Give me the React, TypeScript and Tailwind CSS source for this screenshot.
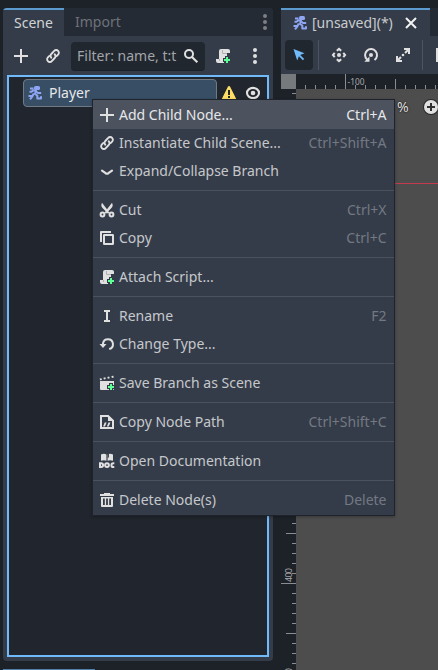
import type { ReactNode } from 'react';

const FG = '#e0e0e0';

function Icon({ children, className = '', size = 16 }: { children: ReactNode; className?: string; size?: number }) {
  return (
    <svg width={size} height={size} viewBox="0 0 16 16" className={'block shrink-0 ' + className}>
      {children}
    </svg>
  );
}

const Add = () => <Icon><path fill={FG} d="M7 1v6H1v2h6v6h2V9h6V7H9V1z" /></Icon>;

const Link = () => (
  <Icon>
    <g fill="none" stroke={FG} strokeWidth="1.900" strokeLinecap="round">
      <path d="M6.300 9.700a2.600 2.600 0 0 1 0-3.700L9.200 2.900a2.600 2.600 0 0 1 3.900 0 2.600 2.600 0 0 1 0 3.700L11.600 8.100" />
      <path d="M9.700 6.300a2.600 2.600 0 0 1 0 3.700L6.800 13.100a2.600 2.600 0 0 1-3.900 0 2.600 2.600 0 0 1 0-3.700L4.400 7.900" />
    </g>
  </Icon>
);

const Chevron = () => (
  <Icon><path d="M3 7.600l3.600 2.600q1.400.9 2.800 0L13 7.600" fill="none" stroke={FG} strokeWidth="2.200" strokeLinecap="round" /></Icon>
);

const Cut = () => (
  <Icon>
    <path fill={FG} d="M3 .8C1.800 3.500 2.200 5 4 6.600l2.700 2.600-1.200 1.200 1.500 1.400 1-1 1 1 1.500-1.400-1.200-1.200L12 6.600c1.800-1.600 2.200-3.100 1-5.800L8 7.200z" />
    <g fill="none" stroke={FG} strokeWidth="2"><circle cx="3.500" cy="12.500" r="1.900" /><circle cx="12.500" cy="12.500" r="1.900" /></g>
  </Icon>
);

const Copy = () => (
  <Icon>
    <path fill={FG} d="M2 1a1 1 0 0 0-1 1v10h2V3h9V1z" />
    <rect x="5" y="5" width="9" height="9" rx=".3" fill="none" stroke={FG} strokeWidth="2" />
  </Icon>
);

const Script = () => (
  <Icon>
    <path fill={FG} d="M6 1a2 2 0 0 0-2 2v8H1v2a2 2 0 0 0 2 2h6v-5h3V5h3V3a2 2 0 0 0-2-2z" />
    <path d="M7.500 2v3.500H12M4.500 11v2" fill="none" stroke="#a9abad" strokeWidth=".9" />
    <path fill="#343b48" d="M10 8h4v2h2v4h-2v2h-4v-2H8v-4h2z" />
    <path fill="#5fff97" d="M11 9h2v2h2v2h-2v2h-2v-2H9v-2h2z" />
  </Icon>
);

const Rename = () => (
  <Icon><path fill={FG} d="M5 2v2h2v8H5v2h6v-2H9V4h2V2z" /></Icon>
);

const Reload = () => (
  <Icon>
    <path d="M4 9V7.500A5 5 0 1 1 10.200 13" fill="none" stroke={FG} strokeWidth="2" />
    <path fill={FG} d="M.5 8h7L4 12z" />
  </Icon>
);

const SaveScene = () => (
  <Icon>
    <path fill={FG} d="M1 6h14v8a1 1 0 0 1-1 1H2a1 1 0 0 1-1-1z" />
    <path fill={FG} d="m.6 3.600 1.800-.4.6 1.700-1.900.4zM4.400 2.700l1.900-.4.5 1.800-1.900.4zM8.300 1.900l1.900-.4.5 1.800-1.900.4zM12.400 1.100l1.900-.4.5 1.800-1.900.4z" />
    <path fill="#343b48" d="M10 8h4v2h2v4h-2v2h-4v-2H8v-4h2z" />
    <path fill="#5fff97" d="M11 9h2v2h2v2h-2v2h-2v-2H9v-2h2z" />
  </Icon>
);

const PathIcon = () => (
  <Icon>
    <path d="M2 2h7l5 4.800V14H2z" fill="none" stroke={FG} strokeWidth="2" />
    <path fill={FG} d="M9 1l6 6H9zM5.700 8.500h1.900L6 12.500H4.100zM9.500 8.500h1.900l-1.600 4H7.900z" />
  </Icon>
);

const Docs = () => (
  <Icon>
    <path fill={FG} d="M2 1.500C4 .6 6 .6 7.400 1.500v6.300C6 7 4 7 2 7.800zM8.600 1.500c1.400-.9 3.400-.9 5.400 0v6.300c-2-.8-4-.8-5.400 0z" />
    <path fill="#343b48" d="M8.700 1h1.200v4l-.6-.7-.6.7z" />
    <path d="M1 10.200h1.200a1.900 1.900 0 0 1 0 3.800H1zM15.300 10.300h-1a1.850 1.850 0 0 0 0 3.700h1" fill="none" stroke={FG} strokeWidth="2" />
    <circle cx="8" cy="12.100" r="1.900" fill="none" stroke={FG} strokeWidth="2" />
  </Icon>
);

const Trash = () => (
  <Icon>
    <path fill={FG} d="M5 1h6v1h4v2H1V2h4zM2 5h12v9a1 1 0 0 1-1 1H3a1 1 0 0 1-1-1z" />
    <path fill="#343b48" d="M4 6.500h1.800V13H4zM7.100 6.500h1.800V13H7.100zM10.200 6.500H12V13h-1.800z" />
  </Icon>
);

const Runner = () => (
  <Icon>
    <path fill="#8da5f3" d="M8.500 1h3a1.500 1.500 0 0 1 1.500 1.500v1A1.500 1.500 0 0 1 11.500 5h-3A1.500 1.500 0 0 1 7 3.500v-1A1.500 1.500 0 0 1 8.500 1z" />
    <path
      d="M3 3.500h3.500M2.500 6.800h2L6 5.500h3L8 9l2.300 1.500v3H14v-2.200M9.200 6.500L11 8h3.200M6.800 8.500L5.500 11H1.500M5.400 11.300L3 14.400"
      fill="none" stroke="#8da5f3" strokeWidth="2" strokeLinejoin="round"
    />
  </Icon>
);

const Search = () => (
  <Icon>
    <circle cx="6" cy="6" r="4" fill="none" stroke={FG} strokeWidth="2" />
    <path d="M9 9l5.300 5.300" stroke={FG} strokeWidth="2.100" />
  </Icon>
);

const Dots = ({ color }: { color: string }) => (
  <Icon><g fill={color}><circle cx="8" cy="2" r="2" /><circle cx="8" cy="8" r="2" /><circle cx="8" cy="14" r="2" /></g></Icon>
);

const Warning = () => (
  <Icon>
    <path fill="#ffdd65" d="M8 1c.4 0 .8.2 1 .6l6 12c.3.7-.2 1.400-1 1.400H2c-.8 0-1.300-.7-1-1.400l6-12c.2-.4.6-.6 1-.6z" />
    <path fill="#21262e" d="M7 5h2v5H7zM7 11h2v2H7z" />
  </Icon>
);

const Eye = () => (
  <Icon>
    <ellipse cx="8" cy="8" rx="6" ry="5.100" fill="none" stroke={FG} strokeWidth="2.100" />
    <circle cx="8" cy="8" r="2.300" fill={FG} />
  </Icon>
);

const Close = () => <Icon><path d="M3 3l10 10M13 3L3 13" stroke="#f2f2f2" strokeWidth="2" /></Icon>;

const Select = () => (
  <Icon><path fill="#70bafa" d="M2.500 2l11 4.200-4.300 1.700 4 4-1.300 1.300-4-4L6.200 13.500z" /></Icon>
);

const Move = () => (
  <Icon>
    <circle cx="8" cy="8" r="2" fill={FG} />
    <path
      d="M5.800 3.700L8 1.900l2.200 1.800M5.800 12.300L8 14.100l2.200-1.800M3.700 5.800L1.900 8l1.800 2.200M12.300 5.800L14.100 8l-1.800 2.200"
      fill="none" stroke={FG} strokeWidth="2"
    />
  </Icon>
);

const Rotate = () => (
  <Icon>
    <path d="M4 12.500A6 6 0 1 1 11.500 13" fill="none" stroke={FG} strokeWidth="2" />
    <path fill={FG} d="M6.500 9.500v5.200H1.300z" />
    <circle cx="8" cy="8" r="2" fill={FG} />
  </Icon>
);

const Scale = () => (
  <Icon>
    <path fill={FG} d="M9 1h6v6h-2V4.500L10.800 6.700 9.300 5.200 11.500 3H9zM1 9h2v2.500l2.200-2.200 1.500 1.500L4.500 13H7v2H1z" />
    <circle cx="8" cy="8" r="1.300" fill={FG} />
  </Icon>
);

type Entry = { icon: ReactNode; label: string; keys?: string; active?: boolean };

const groups: Entry[][] = [
  [
    { icon: <Add />, label: 'Add Child Node...', keys: 'Ctrl+A', active: true },
    { icon: <Link />, label: 'Instantiate Child Scene...', keys: 'Ctrl+Shift+A' },
    { icon: <Chevron />, label: 'Expand/Collapse Branch' },
  ],
  [
    { icon: <Cut />, label: 'Cut', keys: 'Ctrl+X' },
    { icon: <Copy />, label: 'Copy', keys: 'Ctrl+C' },
  ],
  [{ icon: <Script />, label: 'Attach Script...' }],
  [
    { icon: <Rename />, label: 'Rename', keys: 'F2' },
    { icon: <Reload />, label: 'Change Type...' },
  ],
  [{ icon: <SaveScene />, label: 'Save Branch as Scene' }],
  [{ icon: <PathIcon />, label: 'Copy Node Path', keys: 'Ctrl+Shift+C' }],
  [{ icon: <Docs />, label: 'Open Documentation' }],
  [{ icon: <Trash />, label: 'Delete Node(s)', keys: 'Delete' }],
];

function ContextMenu() {
  return (
    <div className="absolute left-[92px] top-[99px] w-[303px] border border-[#1f242c] bg-[#353c49] pb-px shadow-[0_1px_3px_rgba(0,0,0,0.3)]">
      {groups.map((group, g) => (
        <div key={g}>
          {g > 0 && <div className="flex h-[11px] items-center"><div className="h-px w-full bg-[#4b525e]" /></div>}
          {group.map((e) => (
            <div
              key={e.label}
              className={
                'flex items-center pl-1.5 pr-[7.5px] ' +
                (e.active ? 'h-[29px] bg-[#4c535f] pt-px text-[#e6e7e9]' : 'h-7 text-[#c5c8cc]')
              }
            >
              {e.icon}
              <span className="ml-1">{e.label}</span>
              <span className={'ml-auto ' + (e.active ? '' : 'text-[#737983]')}>{e.keys}</span>
            </div>
          ))}
        </div>
      ))}
    </div>
  );
}

function SceneDock() {
  return (
    <div className="flex h-[653px] w-[270px] shrink-0 flex-col overflow-hidden rounded-sm bg-[#353c49]">
      <div className="flex h-7 shrink-0 bg-[#252b34]">
        <div className="flex w-[61px] items-center justify-center border-t-2 border-[#5b9bd0] bg-[#353c49] text-[#d0d3d6]">Scene</div>
        <div className="flex items-center pl-[11px] text-[#6d727a]">Import</div>
        <div className="ml-auto mt-1.5"><Dots color="#7c7f84" /></div>
      </div>
      <div className="flex h-[39px] shrink-0 items-center pt-px">
        <div className="ml-2.5"><Add /></div>
        <div className="ml-4"><Link /></div>
        <div className="ml-[10px] flex h-[29px] w-[134px] items-center rounded-sm border-b border-[#1d2229] bg-[#21272f] pl-1.5 text-[#a2a5a9]">
          <span className="w-[100px] overflow-hidden whitespace-nowrap">Filter: name, t:t</span>
          <div className="ml-1.5"><Search /></div>
        </div>
        <div className="ml-2.5"><Script /></div>
        <div className="ml-4"><Dots color={FG} /></div>
      </div>
      <div className="mx-1 h-[582px] border-2 border-[#70bafa] bg-[#21262e] pl-3.5 pt-0.5">
        <div className="flex items-center">
          <div className="flex h-7 w-[194px] items-center rounded-sm border border-[#6f7a86] bg-[#374e65] pl-[3px] text-[#e6e8ea]">
            <Runner />
            <span className="ml-1.5">Player</span>
          </div>
          <div className="ml-1"><Warning /></div>
          <div className="ml-2"><Eye /></div>
        </div>
      </div>
    </div>
  );
}

const hTicks = Array.from({ length: 14 }, (_, i) => 305 + i * 10);
const vTicks = Array.from({ length: 58 }, (_, i) => 93 + i * 10);

function Rulers() {
  return (
    <svg width="157" height="596" viewBox="281 74 157 596" className="block">
      <rect x="281" y="74" width="157" height="596" fill="#4d4d4d" />
      <rect x="281" y="74" width="157" height="15" fill="#1d2229" />
      <rect x="281" y="74" width="15" height="596" fill="#1d2229" />
      <rect x="281" y="74" width="15" height="15" fill="#777a7d" />
      {hTicks.map((x) => {
        const h = x === 345 ? 15 : x === 395 ? 10 : 4;
        return <rect key={x} x={x} y={89 - h} width="1" height={h} fill="#8a8c8f" />;
      })}
      {vTicks.map((y) => {
        const w = (y - 83) % 100 === 0 ? 15 : (y - 33) % 100 === 0 ? 10 : 4;
        return <rect key={y} x={296 - w} y={y} width={w} height="1" fill="#8a8c8f" />;
      })}
      <rect x="296" y="183" width="142" height="1" fill="#c43b50" />
      <g fill="#a5a7aa" fontSize="9" fontFamily="Noto Sans">
        <text x="347.500" y="85" textLength="17" lengthAdjust="spacingAndGlyphs">-100</text>
        <text transform="translate(292 582) rotate(-90)" textLength="14">400</text>
        <text transform="translate(292 682) rotate(-90)" textLength="14">500</text>
      </g>
      <circle cx="431" cy="107" r="8" fill="#292929" />
      <circle cx="431" cy="107" r="7" fill={FG} />
      <path d="M427 107h8M431 103v8" stroke="#303030" strokeWidth="2" />
    </svg>
  );
}

function Viewport() {
  return (
    <div className="relative ml-2 w-[157px] shrink-0">
      <div className="flex h-7 bg-[#252b34]">
        <div className="flex w-[149px] items-center border-t-2 border-[#5b9bd0] bg-[#353c49] pl-[11px] text-[#c8cbce]">
          <Runner />
          <span className="ml-1">[unsaved](*)</span>
          <div className="ml-auto mr-[11px]"><Close /></div>
        </div>
      </div>
      <div className="flex h-[38px] items-center overflow-hidden bg-[#353c49]">
        <div className="ml-1 flex h-[30px] w-7 shrink-0 items-center justify-center rounded-sm bg-[#21272f]"><Select /></div>
        <div className="ml-[5px] h-[30px] w-px shrink-0 bg-[#4d545f]" />
        <div className="ml-3"><Move /></div>
        <div className="ml-4"><Rotate /></div>
        <div className="ml-4"><Scale /></div>
        <div className="ml-[11px] h-[30px] w-px shrink-0 bg-[#4d545f]" />
        <div className="ml-[13px] h-3.5 w-2 shrink-0 bg-[#e0e0e0]" />
      </div>
      <Rulers />
      <span className="absolute left-[116px] top-[89px] text-[14px] text-[#dedede] [text-shadow:0_0_2px_#000]">%</span>
    </div>
  );
}

export default function App() {
  return (
    <div className="relative h-[670px] w-[438px] overflow-hidden whitespace-nowrap bg-[#1d2229] font-['Noto_Sans',sans-serif] text-[14px] leading-5">
      <div className="flex pl-[3px] pt-2">
        <SceneDock />
        <Viewport />
      </div>
      <div className="absolute bottom-0 left-[3px] h-px w-[92px] bg-[#5280a8]" />
      <ContextMenu />
    </div>
  );
}
